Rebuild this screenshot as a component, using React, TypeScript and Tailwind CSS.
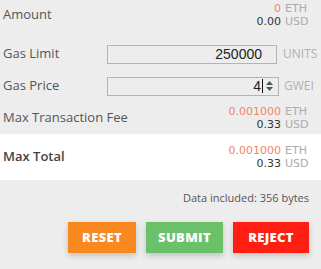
import React from 'react';

const font = { fontFamily: '"Open Sans", "Liberation Sans", sans-serif' };
const valueFont = { fontFamily: '"DejaVu Sans", "Liberation Sans", sans-serif' };

const Amount = ({ value, unit, accent }: { value: string; unit: string; accent?: boolean }) => (
    <div className="flex h-[13px] items-center justify-end leading-[13px]">
        <span className={accent ? 'text-[#f0846a]' : 'text-[#333]'}>{value}</span>
        <span className="ml-[4px] w-[24px] text-[#ababab]">{unit}</span>
    </div>
);

const ValueBlock = ({ eth, usd }: { eth: string; usd: string }) => (
    <div className="flex flex-col text-[11px]" style={valueFont}>
        <Amount value={eth} unit="ETH" accent />
        <Amount value={usd} unit="USD" />
    </div>
);

const Spinner = () => (
    <svg width="9" height="12" viewBox="0 0 9 12" className="ml-[2px]">
        <path d="M4.5 1 L8 5 L1 5 Z" fill="#555" />
        <path d="M4.5 11 L8 7 L1 7 Z" fill="#555" />
    </svg>
);

export default function App() {
    return (
        <div className="w-[321px] h-[269px] bg-[#ededed] text-[13px] text-[#555]" style={font}>
            <div className="flex h-[30px] items-center justify-between pl-[3px] pr-3">
                <span>Amount</span>
                <ValueBlock eth="0" usd="0.00" />
            </div>

            <div className="mt-2 flex h-8 items-center pl-[3px]">
                <span className="w-[104px]">Gas Limit</span>
                <div className="flex h-[19px] w-[170px] items-center justify-end border border-[#b4b4b4] pr-[14px] text-[14px] text-[#222]" style={{ fontFamily: '"Liberation Sans", sans-serif' }}>
                    250000
                </div>
                <span className="ml-[6px] text-[12px] text-[#b0b0b0]">UNITS</span>
            </div>

            <div className="flex h-8 items-center pl-[3px]">
                <span className="w-[104px]">Gas Price</span>
                <div className="flex h-[19px] w-[172px] items-center justify-end border border-[#b4b4b4] pr-[4px] text-[14px] text-[#222]" style={{ fontFamily: '"Liberation Sans", sans-serif' }}>
                    4
                    <span className="ml-[1px] h-[14px] w-px bg-[#111]" />
                    <Spinner />
                </div>
                <span className="ml-[5px] text-[12px] text-[#b0b0b0]">GWEI</span>
            </div>

            <div className="flex h-8 items-center justify-between pl-[3px] pr-3">
                <span>Max Transaction Fee</span>
                <ValueBlock eth="0.001000" usd="0.33" />
            </div>

            <div className="flex h-[46px] items-center justify-between bg-white pl-[3px] pr-3">
                <span className="font-semibold text-[#444]">Max Total</span>
                <ValueBlock eth="0.001000" usd="0.33" />
            </div>

            <div className="mt-[11px] pr-3 text-right text-[11px] leading-[14px] text-[#555]">
                Data included: 356 bytes
            </div>

            <div className="mt-[17px] flex justify-end gap-[10px] pr-3 text-[13px] font-extrabold tracking-wide text-white">
                <button className="h-[31px] w-[68px] bg-[#f7891f] shadow-[0_3px_6px_rgba(0,0,0,0.18)]">RESET</button>
                <button className="h-[31px] w-[77px] bg-[#6bc06a] shadow-[0_3px_6px_rgba(0,0,0,0.18)]">SUBMIT</button>
                <button className="h-[31px] w-[76px] bg-[#ff1f12] shadow-[0_3px_6px_rgba(0,0,0,0.18)]">REJECT</button>
            </div>
        </div>
    );
}
